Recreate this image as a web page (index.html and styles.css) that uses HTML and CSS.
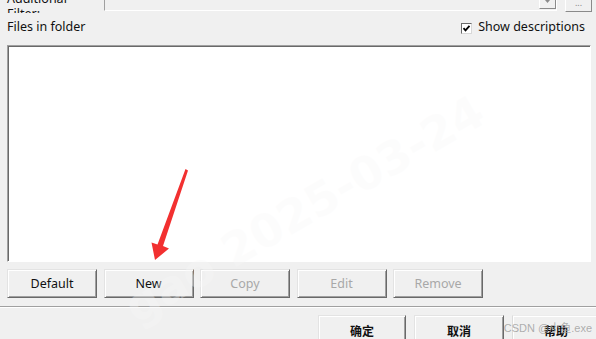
FILE: index.html
```html
<!doctype html>
<html>
<head>
<meta charset="UTF-8">
<title>Files in folder</title>
<link rel="stylesheet" href="styles.css">
</head>
<body>
<div class="dialog">

	<div class="filter-row">
		<div class="filter-label">Additional<br>Filter:</div>
		<div class="filter-field">
			<span class="drop-btn"><svg width="5" height="3" viewBox="0 0 5 3"><path d="M0 0h5L2.5 3z" fill="#8a8a8a"/></svg></span>
		</div>
		<div class="more-btn">...</div>
	</div>

	<div class="files-head">
		<span>Files in folder</span>
		<label class="show-desc">
			<span class="check"><svg width="9" height="9" viewBox="0 0 9 9"><path d="M1.5 4.2l2 2.2 4-4.6" fill="none" stroke="#000" stroke-width="1.8"/></svg></span>
			Show descriptions
		</label>
	</div>

	<div class="file-list"></div>

	<div class="action-row">
		<button class="btn">Default</button>
		<button class="btn">New</button>
		<button class="btn" disabled>Copy</button>
		<button class="btn" disabled>Edit</button>
		<button class="btn" disabled>Remove</button>
	</div>

	<div class="separator"></div>

	<div class="dialog-buttons">
		<button class="btn btn-cn">确定</button>
		<button class="btn btn-cn wide">取消</button>
		<button class="btn btn-cn help">帮助</button>
	</div>

	<!-- overlays -->
	<div class="watermark">gao 2025-03-24</div>
	<svg class="arrow" width="596" height="339" viewBox="0 0 596 339">
		<polygon points="185.5,169 188,170.5 163,246 169,248.5 155,260 151.5,242.5 157.5,244.5" fill="#f23030"/>
	</svg>
	<div class="csdn-mark">CSDN @小鱼.exe</div>
</div>
</body>
</html>
```

FILE: styles.css
```css
* {
	box-sizing: border-box;
}

body {
	margin: 0;
	padding: 0;
	background: #f0f0f0;
	font-family: "Noto Sans", "Noto Sans CJK SC", sans-serif;
	font-size: 12.5px;
	color: #111;
}

.dialog {
	position: relative;
	width: 596px;
	height: 339px;
	overflow: hidden;
}

/* top filter row, mostly scrolled out of view */
.filter-row {
	display: flex;
	margin-top: -9px;
	height: 22px;
	overflow: hidden;
}

.filter-label {
	width: 104px;
	padding-left: 7px;
	line-height: 15px;
}

.filter-field {
	display: flex;
	justify-content: flex-end;
	align-items: flex-end;
	width: 453px;
	height: 20px;
	padding: 0 0 1px 0;
	border: 1px solid;
	border-color: #a0a0a0 #fff #fff #a0a0a0;
}

.drop-btn {
	display: flex;
	justify-content: center;
	align-items: center;
	width: 17px;
	height: 15px;
	background: #f0f0f0;
	border: 1px solid;
	border-color: #fff #8a8a8a #8a8a8a #fff;
}

.more-btn {
	width: 27px;
	height: 21px;
	margin-left: 8px;
	padding-top: 6px;
	border: 1px solid;
	border-color: #fff #8a8a8a #8a8a8a #fff;
	text-align: center;
	font-size: 9px;
	line-height: 9px;
	color: #8a8a8a;
}

.files-head {
	display: flex;
	justify-content: space-between;
	align-items: flex-start;
	height: 32px;
	padding: 6px 11px 0 7px;
	line-height: 16px;
}

.show-desc {
	display: flex;
	align-items: flex-start;
}

.check {
	display: flex;
	justify-content: center;
	align-items: center;
	width: 11px;
	height: 11px;
	margin: 4px 6px 0 0;
	background: #fff;
	border: 1px solid;
	border-color: #6a6a6a #d8d8d8 #d8d8d8 #6a6a6a;
}

.file-list {
	height: 217px;
	margin: 0 5px 0 7px;
	background: #fff;
	border: 1px solid;
	border-color: #a0a0a0 #fff #fff #a0a0a0;
	box-shadow: inset 1px 1px 0 #696969;
}

.action-row {
	display: flex;
	gap: 6.5px;
	margin-top: 7px;
	padding: 0 7px;
}

.btn {
	width: 90px;
	height: 29px;
	padding: 0;
	background: #f0f0f0;
	border: 1px solid;
	border-color: #e3e3e3 #696969 #696969 #e3e3e3;
	box-shadow: inset 1px 1px 0 #fff, inset -1px -1px 0 #a0a0a0;
	font-family: "Noto Sans", "Noto Sans CJK SC", sans-serif;
	font-size: 12.5px;
	color: #111;
}

.btn:disabled {
	color: #a8a8a8;
}

.separator {
	margin-top: 8px;
	border-top: 1px solid #a0a0a0;
	border-bottom: 1px solid #fff;
}

.dialog-buttons {
	display: flex;
	justify-content: flex-end;
	gap: 8px;
	margin-right: -4px;
	padding-top: 7px;
}

.btn-cn {
	width: 88px;
	height: 30px;
	padding-top: 1px;
	font-size: 12px;
	font-weight: bold;
}

.btn-cn.wide {
	width: 90px;
}

.btn-cn.help {
	border-color: #ececec #b8b8b8 #b8b8b8 #dcdcdc;
	box-shadow: inset 1px 1px 0 #fff;
}

.watermark {
	position: absolute;
	left: 138px;
	top: 282px;
	transform-origin: 0 45px;
	transform: rotate(-30deg);
	font-family: "DejaVu Sans", sans-serif;
	font-weight: bold;
	font-size: 46px;
	line-height: 52px;
	white-space: nowrap;
	color: rgba(248, 248, 248, 0.35);
	pointer-events: none;
}

.arrow {
	position: absolute;
	left: 0;
	top: 0;
	pointer-events: none;
}

.csdn-mark {
	position: absolute;
	right: 4px;
	bottom: 4px;
	font-family: "Liberation Sans", "Noto Sans CJK SC", sans-serif;
	font-size: 11px;
	color: rgba(160, 160, 160, 0.85);
	pointer-events: none;
}
```
